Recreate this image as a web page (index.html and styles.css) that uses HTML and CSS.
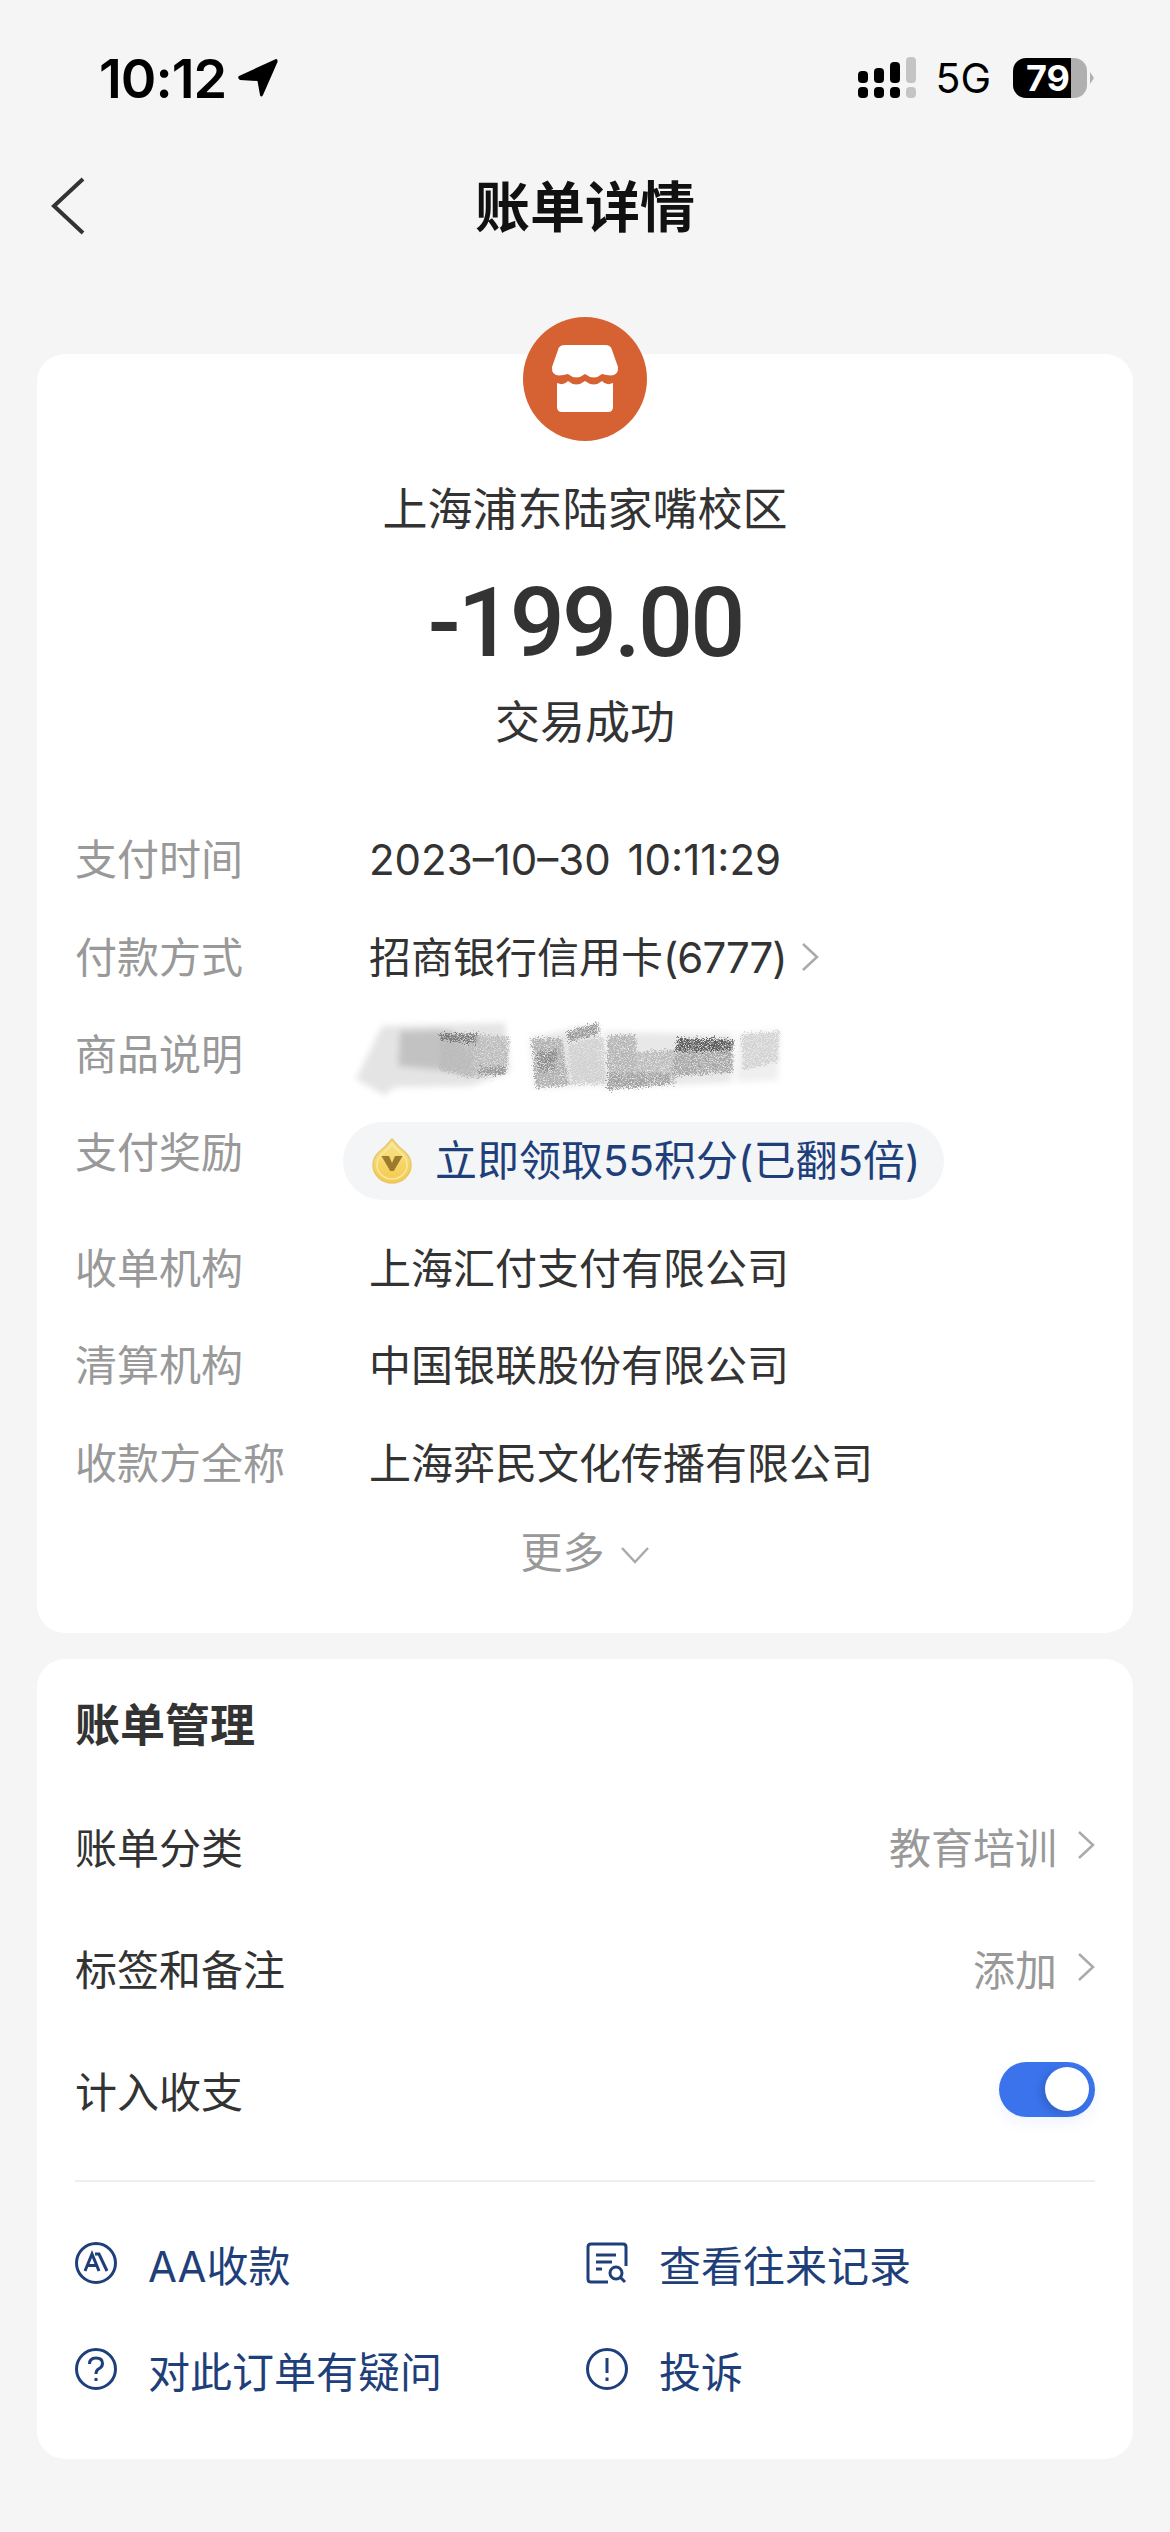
FILE: index.html
```html
<!DOCTYPE html>
<html lang="zh-CN">
  <head>
    <meta charset="UTF-8" />
    <meta name="viewport" content="width=device-width, initial-scale=1.0" />
    <title>账单详情</title>
    <link rel="stylesheet" href="styles.css">
  </head>
  <body>
    <div class="status-bar">
      <div class="status-left">
        <span class="clock">10:12</span>
        <svg class="location" viewBox="0 0 40 38"><path d="M38 0 Q40 0 39.500 3 L25 36 Q23 39 22 36 L19.500 22 L2 21 Q-1 19 1 17 Z" /></svg>
      </div>
      <div class="status-right">
        <svg class="signal" viewBox="0 0 60 42">
          <rect x="0" y="14" width="10" height="12" rx="4" />
          <rect x="16" y="11" width="10" height="15" rx="4" />
          <rect x="32" y="5" width="10" height="21" rx="4" />
          <rect class="off" x="48" y="0" width="10" height="26" rx="4" />
          <rect x="0" y="30" width="10" height="11" rx="4" />
          <rect x="16" y="30" width="10" height="11" rx="4" />
          <rect x="32" y="30" width="10" height="11" rx="4" />
          <rect class="off" x="48" y="30" width="10" height="11" rx="4" />
        </svg>
        <span class="network">5G</span>
        <span class="battery">79</span>
        <span class="battery-cap"></span>
      </div>
    </div>

    <div class="nav">
      <svg class="back" viewBox="0 0 34 58"><path d="M32 2 L3 29 L32 56" /></svg>
      <h1>账单详情</h1>
    </div>

    <div class="card summary">
      <svg class="merchant-icon" viewBox="0 0 124 124">
        <circle cx="62" cy="62" r="62" fill="#d66233" />
        <path fill="#fff" d="M42 28 H82 Q88 28 89 33 L95 50 Q96 62 79 57 Q71 64 62 57 Q53 64 45 57 Q28 62 29 50 L35 33 Q36 28 42 28 Z" />
        <path fill="#fff" d="M34 66 Q41 69 45 64 Q53 71 62 64 Q71 71 79 64 Q83 69 90 66 V90 Q90 95 85 95 H39 Q34 95 34 90 Z" />
      </svg>
      <div class="merchant">上海浦东陆家嘴校区</div>
      <div class="amount">-199.00</div>
      <div class="result">交易成功</div>

      <div class="details">
        <div class="row">
          <div class="label">支付时间</div>
          <div class="value date">2023–10–30 10:11:29</div>
        </div>
        <div class="row">
          <div class="label">付款方式</div>
          <div class="value">招商银行信用卡<span class="card-no">(6777)</span><svg class="chevron" viewBox="0 0 18 30"><path d="M2 2 L16 15 L2 28" /></svg></div>
        </div>
        <div class="row">
          <div class="label">商品说明</div>
          <div class="value">
            <svg class="scribble" viewBox="0 0 460 110">
              <defs>
                <filter id="grain" x="-0.05" y="-0.1" width="1.100" height="1.200">
                  <feTurbulence type="fractalNoise" baseFrequency="0.7 1.400" numOctaves="3" seed="7" result="noise" />
                  <feDisplacementMap in="SourceGraphic" in2="noise" scale="12" xChannelSelector="R" yChannelSelector="G" result="rough" />
                  <feGaussianBlur in="rough" stdDeviation="0.700" result="blurred" />
                  <feColorMatrix in="noise" type="matrix" values="0 0 0 0 0 0 0 0 0 0 0 0 0 0 0 3 0 0 0 -0.700" result="mask" />
                  <feComposite in="blurred" in2="mask" operator="in" />
                </filter>
                <filter id="soft"><feGaussianBlur stdDeviation="3" /></filter>
              </defs>
              <g filter="url(#soft)">
                <path fill="#e4e4e4" d="M16 79 L42 26 L165 23 L170 72 L130 86 L55 87 L44 95 Z" />
                <path fill="#c2c2c2" d="M60 31 L110 30 L135 60 L130 74 L100 70 L58 66 Z" />
                <path fill="#e6e6e6" d="M190 38 L258 24 L264 84 L195 88 Z" />
                <path fill="#e8e8e8" d="M264 32 L392 34 L392 82 L264 88 Z" />
                <path fill="#efefef" d="M398 34 L440 30 L438 80 L396 82 Z" />
              </g>
              <g filter="url(#grain)">
                <path fill="#bbb" d="M100 34 L170 36 L168 62 L165 74 L130 78 L100 70 Z" />
                <path fill="#777" d="M100 34 L138 33 L136 44 L102 40 Z" />
                <path fill="#999" d="M140 68 L168 66 L164 75 L140 75 Z" />
                <path fill="#b0b0b0" d="M192 38 L222 38 L230 86 L196 88 Z" />
                <path fill="#8c8c8c" d="M197 52 L218 50 L216 70 L200 72 Z" />
                <path fill="#999" d="M226 32 L258 22 L260 34 L230 42 Z" />
                <path fill="#d0d0d0" d="M228 45 L264 36 L266 84 L232 84 Z" />
                <path fill="#b4b4b4" d="M268 36 L296 34 L300 84 L268 90 Z" />
                <path fill="#bcbcbc" d="M296 52 L336 50 L336 84 L296 88 Z" />
                <path fill="#a0a0a0" d="M268 72 L330 74 L330 84 L268 90 Z" />
                <path fill="#a6a6a6" d="M336 38 L394 40 L393 72 L334 76 Z" />
                <path fill="#5c5c5c" d="M338 38 L394 40 L392 50 L336 52 Z" />
                <path fill="#d2d2d2" d="M402 34 L440 31 L438 62 L404 70 Z" />
              </g>
            </svg>
          </div>
        </div>
        <div class="row reward-row">
          <div class="label">支付奖励</div>
          <div class="value">
            <span class="reward">
              <svg class="coin" viewBox="0 0 40 46">
                <defs>
                  <linearGradient id="gold" x1="0" y1="0" x2="0" y2="1">
                    <stop offset="0" stop-color="#f6e58e" />
                    <stop offset="1" stop-color="#f5c94c" />
                  </linearGradient>
                </defs>
                <path fill="url(#gold)" stroke="#e8c666" stroke-width="1.500" d="M20 1 Q26 9 33 14 Q39 20 39 27 A19 18 0 0 1 1 27 Q1 20 7 14 Q14 9 20 1 Z" />
                <path fill="none" stroke="#f9e9a0" stroke-width="1.500" d="M20 6 Q25 12 30 16 Q35 21 35 27 A15 14 0 0 1 5 27 Q5 21 10 16 Q15 12 20 6 Z" />
                <path fill="#9c7a2e" d="M9.500 18 H17 L20 25 L23 18 H30.500 L21.800 33 H18.200 Z" />
              </svg>
              立即领取55积分(已翻5倍)
            </span>
          </div>
        </div>
        <div class="row">
          <div class="label">收单机构</div>
          <div class="value">上海汇付支付有限公司</div>
        </div>
        <div class="row">
          <div class="label">清算机构</div>
          <div class="value">中国银联股份有限公司</div>
        </div>
        <div class="row">
          <div class="label">收款方全称</div>
          <div class="value">上海弈民文化传播有限公司</div>
        </div>
      </div>

      <div class="more">更多<svg class="more-arrow" viewBox="0 0 30 18"><path d="M2 2 L15 16 L28 2" /></svg></div>
    </div>

    <div class="card manage">
      <h2>账单管理</h2>
      <div class="manage-row">
        <span>账单分类</span>
        <span class="manage-value">教育培训<svg class="chevron" viewBox="0 0 18 30"><path d="M2 2 L16 15 L2 28" /></svg></span>
      </div>
      <div class="manage-row">
        <span>标签和备注</span>
        <span class="manage-value">添加<svg class="chevron" viewBox="0 0 18 30"><path d="M2 2 L16 15 L2 28" /></svg></span>
      </div>
      <div class="manage-row">
        <span>计入收支</span>
        <span class="toggle"><span class="knob"></span></span>
      </div>

      <div class="actions">
        <div class="action">
          <svg class="action-icon" viewBox="0 0 42 42">
            <circle cx="21" cy="21" r="19.500" />
            <path d="M10 29 L17 12 L24 29 M13 23.500 H21 M20 12 H24 L32 29" />
          </svg>
          AA收款
        </div>
        <div class="action">
          <svg class="action-icon" viewBox="0 0 42 42">
            <path d="M22 40 H5 Q2 40 2 37 V5 Q2 2 5 2 H37 Q40 2 40 5 V24" />
            <path d="M10 13 H30 M10 20 H26 M10 27 H16" />
            <circle cx="30" cy="31" r="6" />
            <path d="M34.500 35.500 L39 40" />
          </svg>
          查看往来记录
        </div>
        <div class="action">
          <svg class="action-icon" viewBox="0 0 42 42">
            <circle cx="21" cy="21" r="19.500" />
            <path d="M14.500 16 Q14.500 10 21 10 Q27.500 10 27.500 15.500 Q27.500 19 23.500 21 Q21 22.500 21 26" />
            <path d="M21 30 V33" />
          </svg>
          对此订单有疑问
        </div>
        <div class="action">
          <svg class="action-icon" viewBox="0 0 42 42">
            <circle cx="21" cy="21" r="19.500" />
            <path d="M21 10 V25 M21 29.500 V33" />
          </svg>
          投诉
        </div>
      </div>
    </div>
  </body>
</html>
```

FILE: styles.css
```css
body {
  margin: 0;
  padding: 0 37px;
  height: 2532px;
  box-sizing: border-box;
  overflow: hidden;
  background-color: #f5f5f5;
  color: #333;
  font-family: "Inter", "Noto Sans CJK SC", sans-serif;
  font-size: 42px;
}

/* Status bar */
.status-bar {
  display: flex;
  justify-content: space-between;
  align-items: center;
  height: 156px;
  padding: 0 39px 0 62px;
  color: #000;
}

.status-left {
  display: flex;
  align-items: center;
  gap: 12px;
}

.clock {
  font-size: 54px;
  font-weight: 600;
  letter-spacing: -1px;
}

.location {
  width: 40px;
  height: 38px;
}

.status-right {
  display: flex;
  align-items: center;
}

.signal {
  width: 60px;
  height: 42px;
  margin-right: 17px;
}

.signal .off {
  fill: #c4c4c4;
}

.network {
  font-size: 41px;
  margin-right: 22px;
}

.battery {
  display: block;
  box-sizing: border-box;
  width: 74px;
  height: 40px;
  padding-left: 13px;
  border-radius: 13px;
  background: linear-gradient(to right, #000 78%, #b0b0b0 78%);
  color: #fff;
  font-size: 36px;
  font-weight: 700;
  line-height: 40px;
}

.battery-cap {
  width: 0;
  height: 0;
  margin-left: 3px;
  border-top: 6px solid transparent;
  border-bottom: 6px solid transparent;
  border-left: 4px solid #b0b0b0;
}

/* Nav */
.nav {
  position: relative;
  height: 100px;
  display: flex;
  justify-content: center;
  align-items: center;
  margin-bottom: 98px;
}

.nav h1 {
  margin: 0 0 6px;
  font-size: 55px;
  font-weight: 700;
  color: #111;
}

.back {
  position: absolute;
  left: 14px;
  top: 21px;
  width: 34px;
  height: 58px;
  fill: none;
  stroke: #333;
  stroke-width: 4;
}

/* Cards */
.card {
  background: #fff;
  border-radius: 28px;
  padding: 0 38px;
}

.summary {
  display: flex;
  flex-direction: column;
  align-items: center;
  padding-bottom: 47px;
  margin-bottom: 26px;
}

.merchant-icon {
  width: 124px;
  height: 124px;
  margin-top: -37px;
}

.merchant {
  margin-top: 39px;
  font-size: 45px;
  line-height: 60px;
}

.amount {
  margin-top: 28px;
  font-family: "Roboto", sans-serif;
  font-size: 97px;
  font-weight: 500;
  letter-spacing: -3px;
  line-height: 110px;
}

.result {
  margin-top: 15px;
  font-size: 45px;
  line-height: 60px;
}

.details {
  align-self: stretch;
  margin-top: 58px;
}

.row {
  display: grid;
  grid-template-columns: 294px 1fr;
  height: 97.5px;
  line-height: 97.5px;
}

.reward-row {
  height: 116px;
}

.label {
  color: #999;
}

.value {
  display: flex;
  align-items: center;
  height: 97.5px;
}

.date {
  word-spacing: 5px;
}

.card-no {
  letter-spacing: -1px;
}

.chevron {
  width: 18px;
  height: 30px;
  fill: none;
  stroke: #aaa;
  stroke-width: 2.5;
  margin-left: 14px;
}

.scribble {
  width: 460px;
  height: 110px;
  margin-left: -29px;
}

.reward-row .value {
  height: auto;
  align-items: flex-start;
}

.reward {
  display: flex;
  align-items: center;
  height: 78px;
  margin: 18px 0 0 -26px;
  padding: 0 24px 0 29px;
  border-radius: 39px;
  background: #f4f5f7;
  color: #1f3f7a;
  line-height: 78px;
}

.coin {
  width: 40px;
  height: 46px;
  margin-right: 23px;
}

.more {
  display: flex;
  align-items: center;
  height: 74px;
  color: #999;
}

.more-arrow {
  width: 30px;
  height: 18px;
  margin: 12px 0 0 15px;
  fill: none;
  stroke: #aaa;
  stroke-width: 2.5;
}

/* Bill management */
.manage {
  padding-top: 37px;
  padding-bottom: 37px;
}

.manage h2 {
  margin: 0 0 28px;
  font-size: 45px;
  font-weight: 700;
  line-height: 60px;
}

.manage-row {
  display: flex;
  justify-content: space-between;
  align-items: center;
  height: 122px;
}

.manage-value {
  display: flex;
  align-items: center;
  color: #999;
}

.manage-value .chevron {
  margin-left: 20px;
}

.toggle {
  display: flex;
  align-items: center;
  justify-content: flex-end;
  box-sizing: border-box;
  width: 96px;
  height: 55px;
  padding-right: 6px;
  border-radius: 28px;
  background: #3a73ec;
  box-shadow: 0 6px 14px rgba(58, 115, 236, 0.08);
}

.knob {
  width: 44px;
  height: 44px;
  border-radius: 50%;
  background: #fff;
  box-shadow: -4px 3px 8px rgba(0, 0, 0, 0.15);
}

.actions {
  display: grid;
  grid-template-columns: 511px 1fr;
  grid-auto-rows: 106px;
  margin-top: 30px;
  padding-top: 28px;
  border-top: 2px solid #eee;
}

.action {
  display: flex;
  align-items: center;
  gap: 31px;
  color: #1f3f7a;
}

.action-icon {
  width: 42px;
  height: 42px;
  fill: none;
  stroke: #1f3f7a;
  stroke-width: 3;
}
```
